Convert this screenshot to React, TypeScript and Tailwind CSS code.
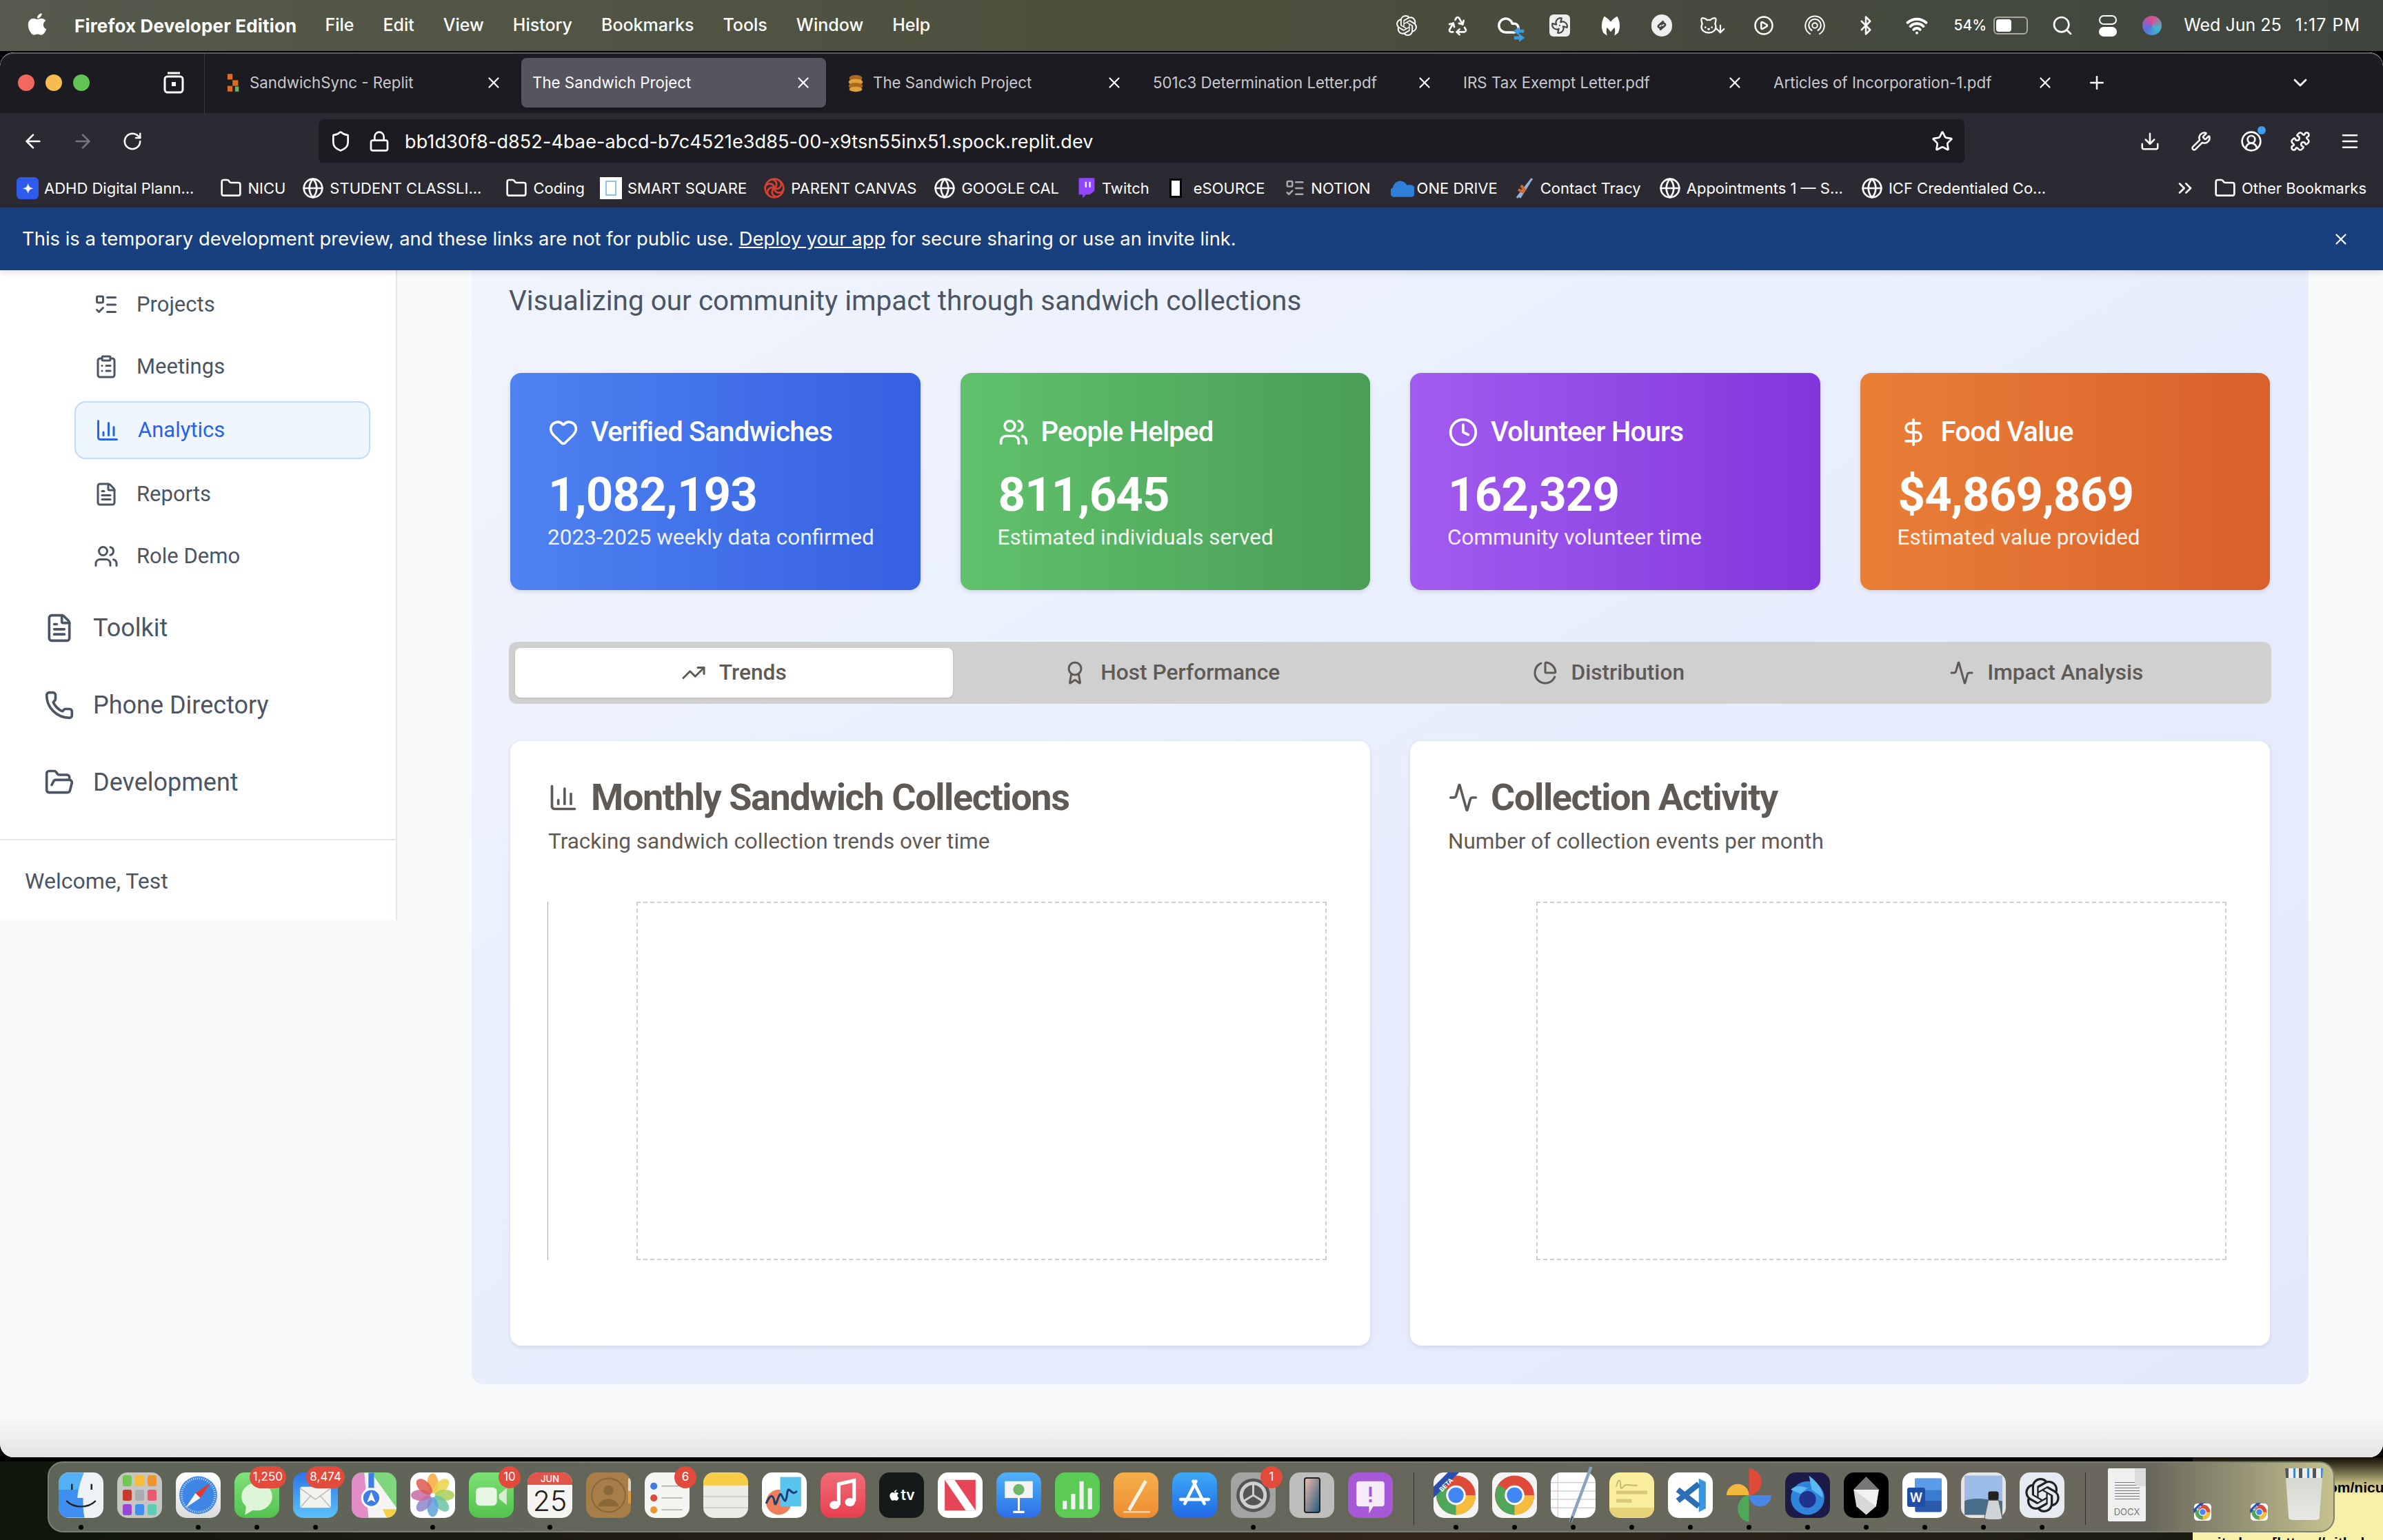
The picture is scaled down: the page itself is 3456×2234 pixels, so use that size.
import { ReactNode } from "react"
import {
  Activity, ArrowDown, ArrowLeft, ArrowRight, Award, Bluetooth, ChartColumn, ChartPie, ChevronDown, ChevronsRight,
  CirclePlay, CircleUserRound, ClipboardList, Clock, Cloud, DollarSign, Download, Fan, FileText, Folder,
  FolderOpen, Globe, Heart, ListTodo, Lock, Menu, Phone, Plus, Puzzle, Recycle, RotateCw, Search, Shield, Star,
  TrendingUp, Users, Wifi, Wrench, X, Cat, LoaderPinwheel,
} from "lucide-react"
import { FaApple } from "react-icons/fa"
import { SiOpenai } from "react-icons/si"

const tabs = [
  { title: "SandwichSync - Replit", icon: "replit" },
  { title: "The Sandwich Project", active: true },
  { title: "The Sandwich Project", icon: "stack" },
  { title: "501c3 Determination Letter.pdf" },
  { title: "IRS Tax Exempt Letter.pdf" },
  { title: "Articles of Incorporation-1.pdf" },
]

function TabIcon({ kind }: { kind?: string }) {
  if (kind === "replit")
    return (
      <svg viewBox="0 0 24 32" className="w-[22px] h-[30px] shrink-0">
        <rect x="2" y="2" width="8" height="9" fill="#dd6b20" />
        <rect x="10" y="12" width="9" height="9" fill="#dd6b20" />
        <rect x="2" y="21" width="8" height="9" fill="#dd6b20" />
        <rect x="14" y="22" width="6" height="8" fill="#68b36b" />
      </svg>
    )
  if (kind === "stack")
    return (
      <svg viewBox="0 0 24 32" className="w-[26px] h-[30px] shrink-0">
        <ellipse cx="12" cy="9" rx="10" ry="5" fill="#a8691f" />
        <ellipse cx="12" cy="15" rx="11" ry="5" fill="#e0a13c" />
        <ellipse cx="12" cy="21" rx="11" ry="5" fill="#a8691f" />
        <ellipse cx="12" cy="26" rx="10" ry="4" fill="#e0a13c" />
      </svg>
    )
  return null
}

function MenuBar() {
  const menus = ["File", "Edit", "View", "History", "Bookmarks", "Tools", "Window", "Help"]
  const status = [
    <SiOpenai size={30} />,
    <Recycle size={32} />,
    <span className="relative">
      <Cloud size={34} strokeWidth={2.5} />
      <svg viewBox="0 0 16 20" className="absolute right-[-8px] bottom-[-8px] w-[20px] h-[24px]" fill="#3b9ce0"><path d="M8 1 1 6l7 5V8h6V4H8zM8 9v3H2v4h6v3l7-5z" /></svg>
    </span>,
    <span className="bg-[#eee] rounded-md w-[30px] h-[32px] flex items-center justify-center"><Fan size={26} color="#444" /></span>,
    <svg viewBox="0 0 24 24" className="w-[32px] h-[32px]" fill="white"><path d="M5 2c2 1 5 3 7 6 2-3 5-5 7-6 3 5 4 12 1 18l-4 3c1-4 1-7 0-9l-4 5-4-5c-1 2-1 5 0 9l-4-3C1 14 2 7 5 2z" /></svg>,
    <span className="bg-[#eee] rounded-full w-[30px] h-[32px] flex items-center justify-center">
      <svg viewBox="0 0 24 24" className="w-[22px] h-[22px]" fill="none" stroke="#444" strokeWidth="3"><path d="M15 5 7 12c-2 2 2 5 4 3l2-2M9 19l8-7c2-2-2-5-4-3l-2 2" /></svg>
    </span>,
    <span className="flex items-end"><Cat size={28} /><ArrowDown size={18} strokeWidth={3} className="ml-[-6px]" /></span>,
    <span className="relative flex"><CirclePlay size={30} /></span>,
    <svg viewBox="0 0 24 24" className="w-[30px] h-[32px]" fill="none" stroke="white" strokeWidth="1.6"><path d="M7 22a11 11 0 1 1 10 0M9 18a7 7 0 1 1 6 0" /><circle cx="12" cy="12" r="3" /></svg>,
    <Bluetooth size={30} />,
    <Wifi size={32} strokeWidth={3} />,
  ]
  return (
    <div className="h-[74px] shrink-0 flex items-center text-white text-[25px] font-['Inter',sans-serif] bg-gradient-to-r from-[#555a4c] via-[#4d4f3c] to-[#3f463f]">
      <FaApple size={36} className="ml-[36px] mr-[36px] mb-1" />
      <span className="font-bold text-[26px] mr-[41px] tracking-[0.17px]">Firefox Developer Edition</span>
      <div className="flex gap-[42px] font-medium">
        {menus.map((m) => <span key={m}>{m}</span>)}
      </div>
      <div className="ml-auto flex items-center mr-[33px]">
        {status.map((s, i) => (
          <span key={i} className="w-[74px] flex justify-center">{s}</span>
        ))}
        <span className="text-[21px] ml-[17px] font-medium">54%</span>
        <span className="ml-[10px] w-[50px] h-[26px] rounded-md border-2 border-[#a8a8a0] p-[2px]">
          <span className="block w-[22px] h-full bg-white rounded-sm" />
        </span>
        <Search size={32} className="ml-[34px]" />
        <span className="ml-[37px] flex flex-col gap-[3px]">
          <span className="block w-[26px] h-[14px] rounded-full border-2 border-white" />
          <span className="block w-[26px] h-[14px] rounded-full bg-white" />
        </span>
        <span className="ml-[37px] w-[28px] h-[28px] rounded-full bg-[conic-gradient(#e24a8d,#3fb8c9,#5a6fe0,#e24a8d)]" />
        <span className="ml-[32px]">Wed Jun 25</span>
        <span className="ml-[20px] tracking-[1px]">1:17 PM</span>
      </div>
    </div>
  )
}

function TabBar() {
  return (
    <div className="h-[88px] shrink-0 flex bg-[#1c1b22] border-t-2 border-[#5c5c5f] rounded-t-[20px] text-[22.3px] font-['Inter',sans-serif]">
      <div className="w-[297px] shrink-0 flex items-center border-r border-[#3b3a42] pl-[26px] pb-[2px]">
        <span className="w-[24px] h-[24px] rounded-full bg-[#f1685e]" />
        <span className="ml-[16px] w-[24px] h-[24px] rounded-full bg-[#f5bd4f]" />
        <span className="ml-[16px] w-[24px] h-[24px] rounded-full bg-[#60c554]" />
        <svg viewBox="0 0 30 32" className="ml-[107px] w-[30px] h-[32px]" fill="none" stroke="white" strokeWidth="3">
          <path d="M6 2h18" />
          <rect x="2" y="7" width="26" height="23" rx="4" />
          <rect x="12" y="15" width="6" height="6" fill="white" stroke="none" />
        </svg>
      </div>
      <div className="flex pl-[9px] pt-[6px] pb-[6px]">
        {tabs.map((t, i) => (
          <div
            key={i}
            className={
              t.active
                ? "w-[442px] mr-[8px] h-[72px] rounded-lg bg-[#55545f] text-white flex items-center pl-[16px] pr-[20px] shadow-md"
                : "w-[450px] h-[72px] text-[#c9c9cd] flex items-center pl-[22px] pr-[27px]"
            }
          >
            {t.icon && <span className="mr-[12px]"><TabIcon kind={t.icon} /></span>}
            <span className={t.icon || t.active ? "" : "ml-[-6px]"}>{t.title}</span>
            <X size={26} color="white" className="ml-auto" />
          </div>
        ))}
      </div>
      <Plus size={30} color="white" className="self-center ml-[20px] mb-[2px]" />
      <ChevronDown size={32} color="white" className="self-center ml-auto mr-[104px] mb-[2px]" />
    </div>
  )
}

function NavBar() {
  return (
    <div className="h-[72px] shrink-0 bg-[#2b2a33] flex items-center text-white pt-[9px]">
      <ArrowLeft size={32} className="ml-[32px]" />
      <ArrowRight size={32} className="ml-[40px] text-[#77767e]" />
      <RotateCw size={30} className="ml-[41px]" />
      <div className="ml-[255px] w-[2387px] h-[64px] bg-[#1c1b22] rounded-lg flex items-center pl-[16px] pr-[16px]">
        <Shield size={32} />
        <Lock size={32} className="ml-[24px]" />
        <span className="ml-[21px] mt-[3px] text-[27px] font-['Inter',sans-serif] tracking-[0.1px]">bb1d30f8-d852-4bae-abcd-b7c4521e3d85-00-x9tsn55inx51.spock.replit.dev</span>
        <Star size={32} className="ml-auto" />
      </div>
      <Download size={30} className="ml-[254px]" />
      <Wrench size={30} className="ml-[44px]" />
      <span className="relative ml-[42px]">
        <CircleUserRound size={32} />
        <span className="absolute top-[-6px] right-[-5px] w-[12px] h-[12px] rounded-full bg-[#3e9bf0]" />
      </span>
      <Puzzle size={30} className="ml-[40px]" />
      <Menu size={30} className="ml-[42px]" />
    </div>
  )
}

function Bookmarks() {
  const globe = <Globe size={32} />
  const folder = <Folder size={32} />
  const items: { icon: ReactNode; label: string; cls?: string }[] = [
    { icon: <span className="w-[32px] h-[32px] rounded-md bg-[#2f5bea] flex items-center justify-center text-[18px] font-bold">✦</span>, label: "ADHD Digital Plann...", cls: "gap-[8px]" },
    { icon: folder, label: "NICU", cls: "ml-[14px] gap-[8px]" },
    { icon: globe, label: "STUDENT CLASSLI...", cls: "gap-[8px]" },
    { icon: folder, label: "Coding", cls: "ml-[11px] gap-[8px]" },
    { icon: <span className="w-[32px] h-[32px] bg-white flex items-center justify-center"><span className="w-[16px] h-[22px] border-2 border-[#8cc4ea]" /></span>, label: "SMART SQUARE", cls: "ml-[-2px] gap-[8px]" },
    { icon: <LoaderPinwheel size={32} color="#d9402f" />, label: "PARENT CANVAS", cls: "gap-[8px]" },
    { icon: globe, label: "GOOGLE CAL", cls: "ml-[1px] gap-[8px]" },
    { icon: <svg viewBox="0 0 24 28" className="w-[28px] h-[32px]"><path d="M2 1h20v16l-6 5h-5l-4 5v-5H2z" fill="#9146ff" /><path d="M11 6v7M16 6v7" stroke="white" strokeWidth="2" /></svg>, label: "Twitch", cls: "ml-[2px] gap-[8px]" },
    { icon: <span className="w-[18px] h-[28px] bg-white border-[3px] border-black" />, label: "eSOURCE", cls: "ml-[5px] gap-[17px]" },
    { icon: <ListTodo size={30} color="#aaa" />, label: "NOTION", cls: "ml-[5px] gap-[8px]" },
    { icon: <svg viewBox="0 0 32 24" className="w-[34px] h-[26px]"><path d="M4 24a7 7 0 0 1-1-13 10 10 0 0 1 19-3 8 8 0 0 1 7 16z" fill="#2f7ed8" /></svg>, label: "ONE DRIVE", cls: "ml-[5px] gap-[4px]" },
    { icon: <svg viewBox="0 0 30 32" className="w-[30px] h-[32px]"><path d="M4 30 26 2M8 30 22 8" stroke="#8fb2d8" strokeWidth="3" /><path d="M10 12l6 8M6 18l8 4" stroke="#d0672c" strokeWidth="4" /></svg>, label: "Contact Tracy", cls: "gap-[8px]" },
    { icon: globe, label: "Appointments 1 — S...", cls: "ml-[2px] gap-[8px]" },
    { icon: globe, label: "ICF Credentialed Co...", cls: "ml-[2px] gap-[8px]" },
  ]
  return (
    <div className="h-[64px] shrink-0 bg-[#2b2a33] flex items-center text-white text-[22px] font-['Inter',sans-serif] pl-[24px] pr-[24px] pt-[10px]">
      <div className="flex items-center gap-[24px]">
        {items.map((it) => (
          <div key={it.label} className={`flex items-center ${it.cls ?? ""}`}>
            {it.icon}
            <span>{it.label}</span>
          </div>
        ))}
      </div>
      <ChevronsRight size={32} className="ml-auto" />
      <Folder size={32} className="ml-[26px] mr-[8px]" />
      <span>Other Bookmarks</span>
    </div>
  )
}

function SubItem({ icon, label, active }: { icon: ReactNode; label: string; active?: boolean }) {
  return (
    <div
      className={
        active
          ? "ml-[108px] mr-[37px] h-[84px] flex items-center pl-[28px] rounded-2xl bg-[#eff6ff] border-2 border-[#bfdbfe] text-[#2563eb] text-[31px]"
          : "ml-[108px] mr-[37px] h-[90px] flex items-center pl-[28px] text-[#4b5563] text-[31px]"
      }
    >
      <span className="w-[36px] flex justify-center">{icon}</span>
      <span className="ml-[26px]">{label}</span>
    </div>
  )
}

function NavItem({ icon, label }: { icon: ReactNode; label: string }) {
  return (
    <div className="h-[112px] flex items-center pl-[64px] text-[#4b5563] text-[36px]">
      <span className="w-[44px] flex justify-center">{icon}</span>
      <span className="ml-[27px]">{label}</span>
    </div>
  )
}

function Sidebar() {
  return (
    <aside className="w-[576px] h-[943px] shrink-0 bg-white border-r-2 border-[#e5e7eb] flex flex-col font-['Roboto',sans-serif]">
      <div className="pt-[5px]">
        <SubItem icon={<ListTodo size={36} />} label="Projects" />
        <SubItem icon={<ClipboardList size={36} />} label="Meetings" />
      </div>
      <div className="mt-[5px]">
        <SubItem active icon={<ChartColumn size={36} />} label="Analytics" />
      </div>
      <div className="mt-[6px]">
        <SubItem icon={<FileText size={36} />} label="Reports" />
        <SubItem icon={<Users size={36} />} label="Role Demo" />
      </div>
      <div className="mt-[3px]">
        <NavItem icon={<FileText size={44} />} label="Toolkit" />
        <NavItem icon={<Phone size={44} />} label="Phone Directory" />
        <NavItem icon={<FolderOpen size={44} />} label="Development" />
      </div>
      <div className="mt-[26px] border-t-2 border-[#e5e7eb] pl-[36px] pt-[35px] text-[#4b5563] text-[32px]">Welcome, Test</div>
    </aside>
  )
}

const stats = [
  { icon: <Heart size={44} />, title: "Verified Sandwiches", value: "1,082,193", note: "2023-2025 weekly data confirmed", bg: "from-[#4f82f0] to-[#3560e2]" },
  { icon: <Users size={44} />, title: "People Helped", value: "811,645", note: "Estimated individuals served", bg: "from-[#60c26c] to-[#4a9d56]" },
  { icon: <Clock size={44} />, title: "Volunteer Hours", value: "162,329", note: "Community volunteer time", bg: "from-[#a25cef] to-[#8235dc]" },
  { icon: <DollarSign size={44} />, title: "Food Value", value: "$4,869,869", note: "Estimated value provided", bg: "from-[#e97f37] to-[#d9602b]" },
]

const sections = [
  { icon: <TrendingUp size={36} />, label: "Trends", active: true },
  { icon: <Award size={36} />, label: "Host Performance" },
  { icon: <ChartPie size={36} />, label: "Distribution" },
  { icon: <Activity size={36} />, label: "Impact Analysis" },
]

function ChartCard({ icon, title, sub, axis }: { icon: ReactNode; title: string; sub: string; axis?: boolean }) {
  return (
    <div className="h-[877px] bg-white rounded-2xl shadow-[0_2px_6px_rgba(0,0,0,0.1)] pt-[48px] px-[55px]">
      <div className="flex items-center gap-[18px] text-[#5f5a56]">
        {icon}
        <h2 className="text-[54px] font-bold leading-[68px] tracking-[-1.4px]">{title}</h2>
      </div>
      <p className="mt-[10px] text-[31.5px] text-[#5f5a56] leading-[40px]">{sub}</p>
      <div className="mt-[67px] flex h-[520px]">
        <div className={axis ? "w-[129px] ml-[-1px] border-l border-[#aaaaaa]" : "w-[128px]"} />
        <div className="w-[1001px] border-2 border-dashed border-[#cfcfcf]" />
      </div>
    </div>
  )
}

function Main() {
  return (
    <main className="flex-1 bg-[#f9fafb] font-['Roboto',sans-serif] pl-[108px] pr-[108px] min-w-0">
      <div className="h-[1616px] rounded-b-2xl bg-gradient-to-br from-[#eff4fe] to-[#e3e8fc] pl-[56px] pr-[56px]">
        <p className="ml-[-2px] pt-[18px] text-[40.5px] leading-[52px] text-[#4b5563]">Visualizing our community impact through sandwich collections</p>
        <div className="mt-[79px] grid grid-cols-4 gap-[58px]">
          {stats.map((s) => (
            <div key={s.title} className={`h-[315px] rounded-2xl bg-gradient-to-r ${s.bg} shadow-[0_2px_6px_rgba(0,0,0,0.12)] pl-[55px] pt-[62px] text-white`}>
              <div className="flex items-center gap-[18px] text-[40px] font-medium leading-[48px] tracking-[-0.76px]">
                {s.icon}
                <span>{s.title}</span>
              </div>
              <div className="mt-[27px] text-[69px] font-bold leading-[80px] tracking-[-0.9px]">{s.value}</div>
              <div className="mt-[2px] ml-[-1px] text-[31.5px] leading-[40px] text-white/90">{s.note}</div>
            </div>
          ))}
        </div>
        <div className="mt-[75px] h-[90px] rounded-xl bg-[#d0d0d0] grid grid-cols-4 p-[9px] ml-[-2px] mr-[-2px]">
          {sections.map((s) => (
            <div
              key={s.label}
              className={
                s.active
                  ? "flex items-center justify-center gap-[19px] rounded-lg bg-white text-[#5f5a56] text-[31.7px] font-medium shadow-sm"
                  : "flex items-center justify-center gap-[19px] text-[#5f5a56] text-[31.7px] font-medium"
              }
            >
              {s.icon}
              <span>{s.label}</span>
            </div>
          ))}
        </div>
        <div className="mt-[54px] grid grid-cols-2 gap-[58px]">
          <ChartCard axis icon={<ChartColumn size={44} />} title="Monthly Sandwich Collections" sub="Tracking sandwich collection trends over time" />
          <ChartCard icon={<Activity size={44} />} title="Collection Activity" sub="Number of collection events per month" />
        </div>
      </div>
    </main>
  )
}

function Tile({ bg, children, dot, badge, over }: { bg: string; children?: ReactNode; dot?: boolean; badge?: string; over?: ReactNode }) {
  return (
    <div className="relative w-[65px] h-[66px] shrink-0">
      <div className={`w-full h-full rounded-[15px] overflow-hidden flex items-center justify-center ${bg}`}>{children}</div>
      {over}
      {badge && (
        <span className="absolute top-[-9px] right-[-10px] min-w-[32px] h-[32px] px-[5px] rounded-full bg-[#e04b3c] text-white text-[17px] font-['Inter',sans-serif] flex items-center justify-center">{badge}</span>
      )}
      {dot && <span className="absolute left-[29px] bottom-[-17px] w-[7px] h-[7px] rounded-full bg-black" />}
    </div>
  )
}

const S = ({ children }: { children: ReactNode }) => (
  <svg viewBox="0 0 64 64" className="w-full h-full overflow-visible">{children}</svg>
)

const ChromeMark = () => (
  <>
    <circle cx="32" cy="32" r="28" fill="#de4b39" />
    <path d="M32 32 7 44a28 28 0 0 1 2-27z" fill="#4fa75a" />
    <path d="M32 32 7 44a28 28 0 0 0 25 16l8-16z" fill="#4fa75a" />
    <path d="M32 32h28a28 28 0 0 1-28 28z" fill="#f5bd3b" />
    <circle cx="32" cy="32" r="14" fill="white" />
    <circle cx="32" cy="32" r="11" fill="#4285f4" />
  </>
)

const BetaChrome = () => (
  <S>
    <ChromeMark />
    <path d="M-2 38 38-2H22L-2 22z" fill="#2a4db0" />
    <text x="8" y="26" fill="white" fontSize="9" fontWeight="700" fontFamily="Inter, sans-serif" transform="rotate(-45 12 22)">BETA</text>
  </S>
)

function Dock() {
  const petals = ["#f4a93c", "#e8d44a", "#a7cf57", "#6cc3a3", "#5da2dc", "#8d86cd", "#c86aa5", "#dd5a52"]
  const grid = ["bg-[#72c654]", "bg-[#f5bd3b]", "bg-[#ee9433]", "bg-[#c93a2e]", "bg-[#a9abad]", "bg-[#e85a70]", "bg-[#9847d6]", "bg-[#3f8ef0]", "bg-[#5fcdb5]"]
  return (
    <div className="absolute left-[69px] top-[6px] w-[3317px] h-[103px] rounded-[22px] border-2 border-[#7c8073] bg-gradient-to-r from-[#5f6458] via-[#6a685c] via-[92%] to-[#c5c28f] flex items-start pl-[14px] pt-[14px] gap-[20px]">
      <Tile dot bg="bg-[#eef1f5]">
        <S>
          <path d="M0 0h36c-5 12-9 26-9 36h8c0 10 0 20 2 28H0z" fill="#3f8ff0" />
          <path d="M0 0h36c-3 8-6 16-7 24H0z" fill="#62c6f8" opacity="0.6" />
          <path d="M19 16v8M47 16v8" stroke="#222" strokeWidth="2.5" />
          <path d="M11 40c11 11 31 11 42 0" stroke="#222" strokeWidth="2.2" fill="none" />
        </S>
      </Tile>
      <Tile bg="bg-[#c5c6c2]">
        <div className="grid grid-cols-3 gap-[5px]">
          {grid.map((c) => (
            <span key={c} className={`w-[13px] h-[16px] rounded-[3px] ${c}`} />
          ))}
        </div>
      </Tile>
      <Tile dot bg="bg-gradient-to-b from-white to-[#dcdcdc]">
        <S>
          <circle cx="32" cy="32" r="27" fill="#3d86e6" />
          <circle cx="32" cy="32" r="24" fill="none" stroke="#cfe3fa" strokeWidth="3" strokeDasharray="1 2" />
          <path d="M50 14 28 29l7 7z" fill="#e5392d" />
          <path d="M14 50 35 36l-7-7z" fill="#f4f4f4" />
        </S>
      </Tile>
      <Tile dot badge="1,250" bg="bg-gradient-to-b from-[#7fe27a] to-[#52c34d]">
        <S><ellipse cx="32" cy="34" rx="22" ry="20" fill="#dff5d8" /><path d="M17 46 15 60l14-8z" fill="#dff5d8" /></S>
      </Tile>
      <Tile dot badge="8,474" bg="bg-gradient-to-b from-[#2f74ea] to-[#5ec2f7]">
        <S><rect x="10" y="20" width="44" height="30" rx="3" fill="#f2f2ef" /><path d="M10 22l22 16 22-16M10 50l16-18M54 50 38 32" stroke="#bbb" strokeWidth="1.5" fill="none" /></S>
      </Tile>
      <Tile bg="bg-[#7fd67c]">
        <S>
          <path d="M0 0h18l6 64H0z" fill="#e28cc8" />
          <path d="M18 0h10l36 50v14H24z" fill="#f4f4f4" />
          <path d="M44 52h20v12H50z" fill="#f5cf4a" />
          <path d="M24 0h8v24h-8z" fill="#3d7ee6" />
          <circle cx="28" cy="36" r="13" fill="#3d7ee6" stroke="white" strokeWidth="3" />
          <path d="M28 27l6 15-6-3-6 3z" fill="white" />
        </S>
      </Tile>
      <Tile dot bg="bg-white">
        <S>
          {petals.map((c, i) => (
            <ellipse key={c} cx="32" cy="15" rx="8" ry="14" fill={c} opacity="0.85" transform={`rotate(${i * 45} 32 32)`} />
          ))}
        </S>
      </Tile>
      <Tile badge="10" bg="bg-gradient-to-b from-[#7be174] to-[#52c34d]">
        <S><rect x="10" y="21" width="30" height="26" rx="6" fill="#e8f5e4" /><path d="M43 31l11-9v24l-11-9z" fill="#d5ecd0" /></S>
      </Tile>
      <Tile dot bg="bg-[#f6f5f1]">
        <div className="w-full h-full flex flex-col items-center font-['Inter',sans-serif]">
          <span className="w-full h-[18px] shrink-0 bg-[#e05548] text-white text-[13px] font-medium text-center leading-[18px]">JUN</span>
          <span className="text-[41px] font-light leading-[46px] text-[#222]">25</span>
        </div>
      </Tile>
      <Tile bg="bg-[#a77e48]">
        <S><circle cx="32" cy="32" r="24" fill="none" stroke="#8a6738" strokeWidth="2" /><circle cx="32" cy="25" r="7" fill="#8a6738" /><path d="M17 48c3-14 27-14 30 0z" fill="#8a6738" /><rect x="60" y="8" width="4" height="18" fill="#d9d5cb" /><rect x="60" y="26" width="4" height="18" fill="#e09a3b" /></S>
      </Tile>
      <Tile badge="6" bg="bg-[#f5f5f2]">
        <S><circle cx="13" cy="19" r="5" fill="#3f7ee0" /><circle cx="13" cy="36" r="5" fill="#e0493a" /><circle cx="13" cy="53" r="5" fill="#ea9533" /><path d="M24 19h30M24 36h30M24 53h30" stroke="#aaa" strokeWidth="1.5" /></S>
      </Tile>
      <Tile bg="bg-[#ecebe6]">
        <S><rect width="64" height="18" fill="#f5cd47" /><path d="M0 34h64M0 50h64" stroke="#c9c8c3" strokeWidth="1.5" /></S>
      </Tile>
      <Tile bg="bg-white">
        <S><circle cx="24" cy="42" r="18" fill="#ee7f5a" /><rect x="26" y="6" width="30" height="42" fill="#59c4ee" /><path d="M6 44c6-14 10-14 12-2s6-18 10-10 6 14 8-2 6 6 14-4" stroke="#1c3f72" strokeWidth="3" fill="none" /></S>
      </Tile>
      <Tile bg="bg-gradient-to-b from-[#f16b79] to-[#e73f4d]">
        <S><path d="M26 46V16l22-5v30" stroke="white" strokeWidth="5" fill="none" /><ellipse cx="20" cy="46" rx="7" ry="6" fill="white" /><ellipse cx="42" cy="42" rx="7" ry="6" fill="white" /></S>
      </Tile>
      <Tile bg="bg-[#141a1a]">
        <span className="text-white text-[21px] font-semibold font-['Inter',sans-serif] flex items-center"><FaApple size={18} />tv</span>
      </Tile>
      <Tile bg="bg-white">
        <S><path d="M10 10h44v44H10z" fill="#e64558" /><path d="M10 10h14l30 44H40z" fill="white" /></S>
      </Tile>
      <Tile bg="bg-gradient-to-b from-[#50b2f6] to-[#2f6ce8]">
        <S><rect x="12" y="12" width="40" height="24" fill="#f4f4f4" /><circle cx="32" cy="24" r="8" fill="#6db86a" /><path d="M32 36v18M24 56h16" stroke="white" strokeWidth="3" /></S>
      </Tile>
      <Tile bg="bg-[#5ccb55]">
        <S><path d="M14 52V40M26 52V30M38 52V12M50 52V22" stroke="#f2f2f2" strokeWidth="6" /></S>
      </Tile>
      <Tile bg="bg-gradient-to-b from-[#f4b04b] to-[#ee8c30]">
        <S><path d="M20 52 44 10l4 3-24 42z" fill="#f6f1e6" /><path d="M14 56h38" stroke="#f6d9b0" strokeWidth="2" /></S>
      </Tile>
      <Tile bg="bg-gradient-to-b from-[#3ea9f5] to-[#2468e6]">
        <S><path d="M34 12 18 44M30 12l16 32M12 38h40" stroke="white" strokeWidth="4.5" strokeLinecap="round" /></S>
      </Tile>
      <Tile dot badge="1" bg="bg-[#a3a3a1]">
        <S><circle cx="32" cy="32" r="24" fill="#555" /><circle cx="32" cy="32" r="17" fill="none" stroke="#cfcfcf" strokeWidth="5" /><path d="M32 32V14M32 32l16 10M32 32 16 42" stroke="#cfcfcf" strokeWidth="3" /></S>
      </Tile>
      <Tile bg="bg-[#bdbdbb]">
        <div className="w-[24px] h-[52px] rounded-[4px] border-2 border-[#222] bg-gradient-to-br from-[#efb7a8] to-[#1c5c80]" />
      </Tile>
      <Tile bg="bg-[#a658d6]">
        <S><path d="M16 12h32a4 4 0 0 1 4 4v28a4 4 0 0 1-4 4H36l-6 10v-10H16a4 4 0 0 1-4-4V16a4 4 0 0 1 4-4z" fill="#f3ecf8" /><path d="M32 20v14M32 38v4" stroke="#a658d6" strokeWidth="4" /></S>
      </Tile>
      <span className="w-[1px] h-[76px] bg-[#333] ml-[10px] mr-[8px] shrink-0" />
      <Tile dot bg="bg-[#f4f4f4]"><BetaChrome /></Tile>
      <Tile dot bg="bg-[#f4f4f4]"><S><ChromeMark /></S></Tile>
      <Tile dot bg="bg-white" over={
        <svg viewBox="0 0 64 90" className="absolute left-0 top-[-12px] w-[65px] h-[90px] overflow-visible"><path d="M28 84 58 4" stroke="#8ba3bf" strokeWidth="4.5" /><path d="M28 84l3-8" stroke="#444" strokeWidth="2" /></svg>
      }>
        <S><path d="M0 14h64M0 26h64M0 38h64M0 50h64" stroke="#bbb" strokeWidth="1" /><path d="M10 0v64" stroke="#efb7b7" strokeWidth="1" /></S>
      </Tile>
      <Tile dot bg="bg-[#f8ee9e]">
        <S><path d="M0 50h64v14H0z" fill="#e6d27a" /><path d="M10 28h44M10 40h22" stroke="#d8c878" strokeWidth="5" /><path d="M10 20c3-14 6-10 6-2s4 2 6 0 6 0 18 0" stroke="#c9b770" strokeWidth="2" fill="none" /></S>
      </Tile>
      <Tile dot bg="bg-white">
        <S><path d="M44 8 54 13v38l-10 5z" fill="#3a96dd" /><path d="M44 16 14 40M14 24l30 24" stroke="#2c6fb5" strokeWidth="8" /></S>
      </Tile>
      <Tile dot bg="bg-transparent overflow-visible" over={
        <svg viewBox="0 0 64 64" className="absolute inset-0 w-full h-full overflow-visible"><path d="M32 32V-6a18 19 0 0 1 0 38z" fill="#de4b39" /><path d="M32 32H0a16 16 0 0 1 32 0z" fill="#f2b83c" /><path d="M32 32h32a16 16 0 0 1-32 0z" fill="#4a86e8" /><path d="M32 32v38a16 19 0 0 1 0-38z" fill="#4fa75a" /></svg>
      } />
      <Tile dot bg="bg-[#1c1a46]">
        <S><circle cx="32" cy="36" r="24" fill="#2f83d8" /><circle cx="32" cy="38" r="12" fill="#20338c" /><path d="M34 4c10 8 20 18 20 32L38 24z" fill="#5cb8f2" /><path d="M8 24c6-6 14-6 24-2L22 30z" fill="#5cb8f2" /></S>
      </Tile>
      <Tile dot bg="bg-black">
        <S><path d="M32 6 50 24 46 48 32 60 18 48 14 24z" fill="#d8d8d8" /><path d="M32 6 14 24h36z" fill="#777" /><path d="M14 24 46 48 50 24z" fill="#f2f2f2" /></S>
      </Tile>
      <Tile dot bg="bg-white" over={
        <span className="absolute left-[7px] top-[22px] w-[26px] h-[28px] rounded-[3px] bg-[#1e4ea8] text-white text-[18px] font-semibold flex items-center justify-center font-['Inter',sans-serif]">W</span>
      }>
        <S><rect x="18" y="8" width="38" height="48" rx="2" fill="#2a5caa" /><rect x="18" y="8" width="38" height="17" fill="#5a9ce8" /><rect x="18" y="25" width="38" height="15" fill="#3a7bd0" /></S>
      </Tile>
      <Tile dot bg="bg-[#e4e4e4]" over={
        <svg viewBox="0 0 26 42" className="absolute left-[33px] top-[26px] w-[28px] h-[46px]"><rect x="6" y="1" width="14" height="12" rx="3" fill="#222" /><path d="M6 13h14l5 24c0 3-24 3-24 0z" fill="#cfd4d8" stroke="#666" strokeWidth="1" /></svg>
      }>
        <S><rect x="5" y="4" width="54" height="56" fill="#9dbbe8" /><path d="M5 40c14-6 30-2 54 0v20H5z" fill="#476f8a" /></S>
      </Tile>
      <Tile dot bg="bg-[#e6ebf1]">
        <SiOpenai size={50} color="#222" />
      </Tile>
      <span className="w-[1px] h-[76px] bg-[#333] ml-[10px] mr-[12px] shrink-0" />
      <div className="relative w-[55px] h-[77px] bg-[#efefef] shrink-0 mt-[-6px] rounded-[2px] flex flex-col items-center justify-end text-[13px] text-[#777] pb-[4px] font-['Inter',sans-serif]">
        <span className="absolute right-0 top-0 w-[16px] h-[26px] bg-[#dcdcdc] rounded-bl-md" />
        <span className="w-[36px] h-[28px] mb-[6px] bg-[repeating-linear-gradient(#777_0_1px,transparent_1px_4px)]" />
        DOCX
      </div>
      <div className="w-[25px] h-[25px] rounded-[5px] shrink-0 mt-[45px] ml-[50px] bg-white"><BetaChrome /></div>
      <div className="w-[25px] h-[25px] rounded-[5px] shrink-0 mt-[45px] ml-[37px] bg-white"><BetaChrome /></div>
      <div className="relative w-[55px] h-[75px] ml-[5px] mt-[-6px] rounded-b-xl shrink-0 bg-gradient-to-b from-[#d4d4ce] to-[#e8e8e4] [clip-path:polygon(0_0,100%_0,90%_100%,10%_100%)]">
        <div className="h-[14px] bg-[repeating-linear-gradient(90deg,#555_0_5px,#eee_5px_12px,#3f86d0_12px_15px,#eee_15px_20px)]" />
      </div>
    </div>
  )
}

export default function App() {
  return (
    <div className="w-[3456px] h-[2234px] overflow-hidden flex flex-col bg-black">
      <MenuBar />
      <div className="h-[2px] shrink-0" />
      <div className="flex flex-col h-[2038px] shrink-0 rounded-t-[20px] rounded-b-[20px] overflow-hidden bg-[#f9fafb]">
        <TabBar />
        <NavBar />
        <Bookmarks />
        <div className="h-[92px] shrink-0 bg-[#183f7e] flex items-center text-white text-[27.4px] pl-[32px] font-['Inter',sans-serif] relative z-10 shadow-[0_4px_8px_rgba(0,0,0,0.1)] border-t border-[#1f2a44]">
          <span>
            This is a temporary development preview, and these links are not for public use. <u>Deploy your app</u> for secure sharing or use an invite link.
          </span>
          <X size={26} className="ml-auto mr-[48px]" />
        </div>
        <div className="flex-1 flex min-h-0 relative">
          <Sidebar />
          <Main />
          <div className="absolute inset-x-0 bottom-0 h-[60px] bg-gradient-to-b from-transparent to-[#e2e3e5]" />
        </div>
      </div>
      <div className="relative flex-1 bg-black">
        <div className="absolute inset-x-0 top-[6px] bottom-0 bg-gradient-to-r from-[#10160c] via-[#33261c] via-[60%] to-[#141a10]" />
        <div className="absolute right-0 top-0 bottom-0 w-[276px] bg-gradient-to-b from-[#14110a] via-[#b9b37c] via-[30%] to-[#f7f0a8] to-[45%] font-['Liberation_Sans',sans-serif] font-bold text-black overflow-hidden">
          <span className="absolute left-[197px] top-[28px] text-[21px] whitespace-nowrap">om/nicu</span>
          <span className="absolute left-[23px] top-[108px] text-[21px] whitespace-nowrap">git clone [https://github</span>
        </div>
        <Dock />
      </div>
    </div>
  )
}
